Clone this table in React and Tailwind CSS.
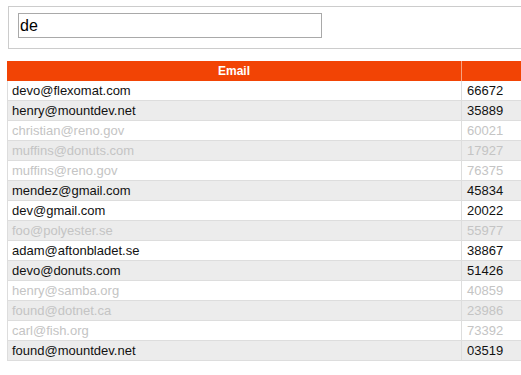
import React from "react";

const rows = [
  ["devo@flexomat.com", "66672", true],
  ["henry@mountdev.net", "35889", true],
  ["christian@reno.gov", "60021", false],
  ["muffins@donuts.com", "17927", false],
  ["muffins@reno.gov", "76375", false],
  ["mendez@gmail.com", "45834", true],
  ["dev@gmail.com", "20022", true],
  ["foo@polyester.se", "55977", false],
  ["adam@aftonbladet.se", "38867", true],
  ["devo@donuts.com", "51426", true],
  ["henry@samba.org", "40859", false],
  ["found@dotnet.ca", "23986", false],
  ["carl@fish.org", "73392", false],
  ["found@mountdev.net", "03519", true],
];

export default function App() {
  return (
    <div className="w-[521px] h-[375px] overflow-hidden bg-white" style={{ fontFamily: '"Liberation Sans", Arial, sans-serif' }}>
      <div className="ml-[8px] mt-[6px] w-[560px] border border-[#cccccc] pl-[9px] pt-[6px] pb-[10px]">
        <input
          defaultValue="de"
          className="block w-[304px] h-[25px] border border-[#a9a9a9] px-[1px] text-[16px] text-black outline-none"
          style={{ fontFamily: '"Liberation Sans", Arial, sans-serif' }}
        />
      </div>
      <div className="ml-[7px] mt-[12px] w-[560px]">
        <div className="flex h-[20px] bg-[#f24405] text-white text-[12px] font-bold">
          <div className="w-[455px] flex items-center justify-center border-r border-[#f7a27f]">Email</div>
          <div className="flex-1"></div>
        </div>
        {rows.map(([email, num, active], i) => (
          <div
            key={i}
            className={
              "flex h-[20px] border-b border-l border-[#dddddd] text-[13px] " +
              (i % 2 === 1 ? "bg-[#ececec] " : "bg-white ") +
              (active ? "text-[#111111]" : "text-[#c4c4c4]")
            }
          >
            <div className="w-[454px] flex items-center pl-[4px] pt-[1px] border-r border-[#dddddd]">{email}</div>
            <div className="flex-1 flex items-center pl-[5px] pt-[1px]">{num}</div>
          </div>
        ))}
      </div>
    </div>
  );
}
